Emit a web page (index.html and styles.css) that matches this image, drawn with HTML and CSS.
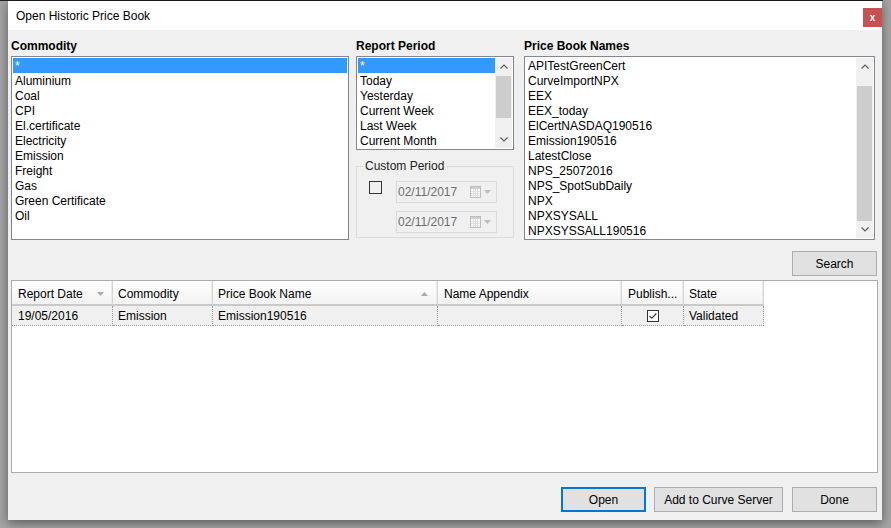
FILE: index.html
```html
<!DOCTYPE html>
<html>
<head>
<meta charset="utf-8">
<link rel="stylesheet" href="styles.css">
</head>
<body>
<div class="topline"></div>
<div class="window">
  <div class="titlebar">
    <span class="title">Open Historic Price Book</span>
    <span class="close">x</span>
  </div>
  <div class="body">
    <div class="filters">
      <div class="col col-commodity">
        <div class="label">Commodity</div>
        <div class="listbox lb-commodity">
          <ul class="items">
            <li class="sel">*</li>
            <li>Aluminium</li>
            <li>Coal</li>
            <li>CPI</li>
            <li>El.certificate</li>
            <li>Electricity</li>
            <li>Emission</li>
            <li>Freight</li>
            <li>Gas</li>
            <li>Green Certificate</li>
            <li>Oil</li>
          </ul>
        </div>
      </div>
      <div class="col col-period">
        <div class="label">Report Period</div>
        <div class="listbox lb-period">
          <ul class="items">
            <li class="sel">*</li>
            <li>Today</li>
            <li>Yesterday</li>
            <li>Current Week</li>
            <li>Last Week</li>
            <li>Current Month</li>
          </ul>
          <div class="sb">
            <div class="sb-btn"><svg width="8" height="5" viewBox="0 0 8 5"><path d="M0.5 4.5L4 1L7.5 4.5" fill="none" stroke="#606060" stroke-width="1.2"/></svg></div>
            <div class="sb-track"><div class="thumb thumb-period"></div></div>
            <div class="sb-btn"><svg width="8" height="5" viewBox="0 0 8 5"><path d="M0.5 0.5L4 4L7.5 0.5" fill="none" stroke="#606060" stroke-width="1.2"/></svg></div>
          </div>
        </div>
        <fieldset class="custom">
          <legend>Custom Period</legend>
          <div class="custom-grid">
            <span class="cb"></span>
            <div class="dates">
              <div class="date"><span class="date-text">02/11/2017</span>
                <svg class="cal" width="11" height="12" viewBox="0 0 11 12"><rect x="0.5" y="0.5" width="10" height="11" fill="#fafafa" stroke="#bdbdbd"/><rect x="1" y="1" width="9" height="2" fill="#cfcfcf"/><path d="M1 5.5h9M1 7.5h9M1 9.5h9M3.5 3v8M5.5 3v8M7.5 3v8" stroke="#e0e0e0" stroke-width="1"/></svg>
                <svg class="dd" width="7" height="4" viewBox="0 0 7 4"><path d="M0 0h7L3.5 4z" fill="#bdbdbd"/></svg>
              </div>
              <div class="date"><span class="date-text">02/11/2017</span>
                <svg class="cal" width="11" height="12" viewBox="0 0 11 12"><rect x="0.5" y="0.5" width="10" height="11" fill="#fafafa" stroke="#bdbdbd"/><rect x="1" y="1" width="9" height="2" fill="#cfcfcf"/><path d="M1 5.5h9M1 7.5h9M1 9.5h9M3.5 3v8M5.5 3v8M7.5 3v8" stroke="#e0e0e0" stroke-width="1"/></svg>
                <svg class="dd" width="7" height="4" viewBox="0 0 7 4"><path d="M0 0h7L3.5 4z" fill="#bdbdbd"/></svg>
              </div>
            </div>
          </div>
        </fieldset>
      </div>
      <div class="col col-names">
        <div class="label">Price Book Names</div>
        <div class="listbox lb-names">
          <ul class="items names">
            <li>APITestGreenCert</li>
            <li>CurveImportNPX</li>
            <li>EEX</li>
            <li>EEX_today</li>
            <li>ElCertNASDAQ190516</li>
            <li>Emission190516</li>
            <li>LatestClose</li>
            <li>NPS_25072016</li>
            <li>NPS_SpotSubDaily</li>
            <li>NPX</li>
            <li>NPXSYSALL</li>
            <li>NPXSYSSALL190516</li>
          </ul>
          <div class="sb">
            <div class="sb-btn"><svg width="8" height="5" viewBox="0 0 8 5"><path d="M0.5 4.5L4 1L7.5 4.5" fill="none" stroke="#606060" stroke-width="1.2"/></svg></div>
            <div class="sb-track"><div class="thumb thumb-names"></div></div>
            <div class="sb-btn"><svg width="8" height="5" viewBox="0 0 8 5"><path d="M0.5 0.5L4 4L7.5 0.5" fill="none" stroke="#606060" stroke-width="1.2"/></svg></div>
          </div>
        </div>
      </div>
    </div>

    <div class="search-row">
      <button class="btn btn-search">Search</button>
    </div>

    <div class="grid">
      <div class="grid-head">
        <div class="gh w-date"><span>Report Date</span><svg class="sort sort-date" width="7" height="4" viewBox="0 0 7 4"><path d="M0 0h7L3.5 4z" fill="#ababab"/></svg></div>
        <div class="gh w-comm"><span>Commodity</span></div>
        <div class="gh w-pbn"><span>Price Book Name</span><svg class="sort sort-pbn" width="7" height="4" viewBox="0 0 7 4"><path d="M0 4h7L3.5 0z" fill="#ababab"/></svg></div>
        <div class="gh w-app"><span>Name Appendix</span></div>
        <div class="gh w-pub"><span>Publish...</span></div>
        <div class="gh w-state"><span>State</span></div>
      </div>
      <div class="grid-row">
        <div class="gd w-date">19/05/2016</div>
        <div class="gd w-comm">Emission</div>
        <div class="gd w-pbn">Emission190516</div>
        <div class="gd w-app"></div>
        <div class="gd w-pub gd-center"><svg width="12" height="12" viewBox="0 0 12 12"><rect x="0.5" y="0.5" width="11" height="11" fill="#fff" stroke="#333"/><path d="M2.5 6L4.8 8.3L9.3 3.5" fill="none" stroke="#333" stroke-width="1.1"/></svg></div>
        <div class="gd w-state">Validated</div>
      </div>
    </div>

    <div class="actions">
      <button class="btn btn-open">Open</button>
      <button class="btn btn-add">Add to Curve Server</button>
      <button class="btn btn-done">Done</button>
    </div>
  </div>
</div>
</body>
</html>
```

FILE: styles.css
```css
html, body {
  margin: 0;
  padding: 0;
}
body {
  width: 891px;
  height: 528px;
  overflow: hidden;
  background: #a4a4a4;
  font-family: "Liberation Sans", Arial, sans-serif;
  font-size: 12px;
  color: #000;
}
.topline {
  width: 883px;
  height: 1px;
  background: #1e1e1e;
}
.window {
  margin-left: 8px;
  width: 874px;
  height: 519px;
  background: #f0f0f0;
  box-shadow: 0 3px 10px rgba(0, 0, 0, 0.45);
  display: flex;
  flex-direction: column;
}
.titlebar {
  height: 29px;
  background: #fff;
  display: flex;
  justify-content: space-between;
  align-items: flex-start;
}
.title {
  padding-left: 8px;
  line-height: 30px;
  font-size: 12px;
  color: #000;
}
.close {
  margin-top: 7px;
  width: 19px;
  height: 19px;
  background: #c75050;
  color: #fff;
  font-size: 10px;
  font-weight: bold;
  display: flex;
  align-items: center;
  justify-content: center;
}
.body {
  flex: 1;
  padding: 8px 4px 8px 3px;
  display: flex;
  flex-direction: column;
}
.filters {
  display: flex;
  height: 202px;
}
.col {
  display: flex;
  flex-direction: column;
}
.col-commodity { width: 338px; }
.col-period { width: 158px; margin-left: 7px; }
.col-names { width: 351px; margin-left: 10px; }
.label {
  font-weight: bold;
  line-height: 16px;
  margin-bottom: 2px;
}
.listbox {
  border: 1px solid #828790;
  background: #fff;
  padding: 1px;
  display: flex;
  box-sizing: border-box;
}
.lb-commodity, .lb-names { height: 184px; }
.lb-period { height: 94px; }
.items {
  list-style: none;
  margin: 0;
  padding: 0;
  flex: 1;
  overflow: hidden;
}
.items li {
  height: 15px;
  box-sizing: border-box;
  padding-top: 1px;
  line-height: 15px;
  padding-left: 2px;
  white-space: nowrap;
}
.items li.sel {
  background: #3399ff;
  color: #fff;
}
.sb {
  width: 17px;
  display: flex;
  flex-direction: column;
  background: #f0f0f0;
}
.sb-btn {
  height: 17px;
  display: flex;
  align-items: center;
  justify-content: center;
}
.sb-track {
  flex: 1;
  padding: 0 1px;
}
.thumb { background: #cdcdcd; }
.thumb-period { height: 42px; margin-top: 1px; }
.thumb-names { height: 135px; margin-top: 11px; }

.custom {
  margin: 8px 0 0;
  padding: 7px 0 4px 6px;
  border: 1px solid #dcdcdc;
  min-width: 0;
}
.custom legend {
  padding: 0 2px;
  line-height: 16px;
  color: #222;
}
.custom-grid {
  display: flex;
  align-items: flex-start;
  padding-left: 6px;
}
.cb {
  width: 13px;
  height: 13px;
  border: 1px solid #333;
  box-sizing: border-box;
}
.dates {
  display: flex;
  flex-direction: column;
  gap: 8px;
  margin-left: 14px;
}
.date {
  width: 101px;
  height: 22px;
  box-sizing: border-box;
  border: 1px solid #d9d9d9;
  display: flex;
  align-items: center;
  padding: 0 5px 0 1px;
  color: #6d6d6d;
}
.date-text { flex: 1; }
.cal { margin-right: 3px; }

.search-row {
  margin-top: 11px;
  display: flex;
  justify-content: flex-end;
  padding-right: 1px;
}
.btn {
  height: 25px;
  box-sizing: border-box;
  border: 1px solid #adadad;
  background: #e1e1e1;
  font: inherit;
  color: #000;
  padding: 0;
}
.btn-search, .btn-done { width: 85px; }
.btn-open { width: 85px; border: 2px solid #0078d7; }
.btn-add { width: 129px; }

.grid {
  margin-top: 4px;
  height: 193px;
  box-sizing: border-box;
  border: 1px solid #ababab;
  background: #fff;
}
.grid-head, .grid-row { display: flex; }
.gh {
  height: 25px;
  box-sizing: border-box;
  display: flex;
  align-items: center;
  padding-top: 2px;
  padding-left: 6px;
  background: linear-gradient(#ffffff, #f3f3f3);
  border-right: 1px solid #d5d5d5;
  border-bottom: 2px solid #c9c9c9;
  box-shadow: inset -1px 0 #ececec;
  white-space: nowrap;
}
.sort { margin-left: auto; }
.sort-date { margin-right: 8px; }
.sort-pbn { margin-right: 9px; }
.w-date { width: 101px; }
.w-comm { width: 100px; }
.w-pbn { width: 225px; }
.w-app { width: 184px; }
.w-pub { width: 62px; }
.w-state { width: 80px; }
.gd {
  height: 20px;
  box-sizing: border-box;
  background: #f0f0f0;
  border-right: 1px dotted #9a9a9a;
  border-bottom: 1px dotted #9a9a9a;
  padding-top: 2px;
  padding-left: 6px;
  line-height: 17px;
  white-space: nowrap;
}
.gd-center {
  padding-top: 0;
  padding-left: 0;
  display: flex;
  align-items: center;
  justify-content: center;
}
.gd.w-comm, .gd.w-pbn, .gd.w-state, .gh.w-comm, .gh.w-pbn, .gh.w-state { padding-left: 5px; }

.actions {
  margin-top: 14px;
  display: flex;
  justify-content: flex-end;
  gap: 9px;
  padding-right: 1px;
}
.actions .btn-open { margin-right: -1px; }
```
